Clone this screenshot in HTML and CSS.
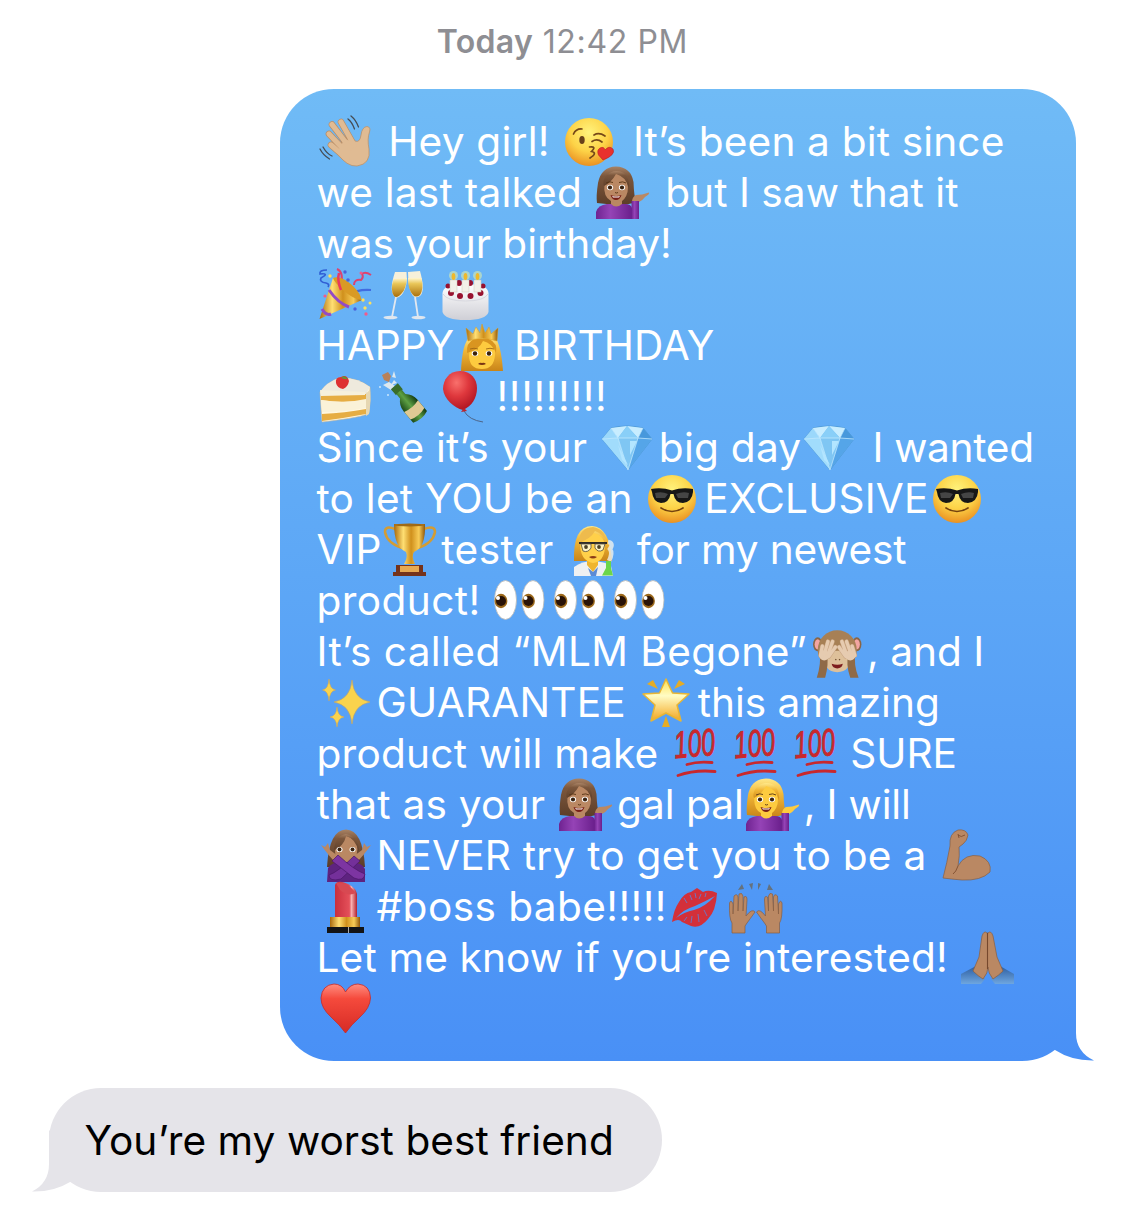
FILE: index.html
```html
<!DOCTYPE html>
<html lang="en">
<head>
<meta charset="utf-8">
<title>Messages</title>
<link rel="stylesheet" href="styles.css">
</head>
<body>
<svg class="sprite" aria-hidden="true">
<defs>
<radialGradient id="g-face" cx=".5" cy=".3" r=".72"><stop offset="0" stop-color="#fff27c"/><stop offset=".55" stop-color="#fdd347"/><stop offset="1" stop-color="#e98d20"/></radialGradient>
<linearGradient id="g-purple" x2="1"><stop offset="0" stop-color="#6f2391"/><stop offset=".4" stop-color="#9543b6"/><stop offset="1" stop-color="#6a1f8c"/></linearGradient>
<linearGradient id="g-gold" x2="1"><stop offset="0" stop-color="#a9690c"/><stop offset=".3" stop-color="#ffdf73"/><stop offset=".55" stop-color="#d0901c"/><stop offset=".8" stop-color="#f8cc57"/><stop offset="1" stop-color="#8f560a"/></linearGradient>
<linearGradient id="g-blond" x2="0" y2="1"><stop offset="0" stop-color="#ffe98a"/><stop offset=".4" stop-color="#f2b838"/><stop offset="1" stop-color="#c98418"/></linearGradient>
<linearGradient id="g-brown" x2="0" y2="1"><stop offset="0" stop-color="#a98365"/><stop offset=".25" stop-color="#7c573c"/><stop offset="1" stop-color="#5c3d28"/></linearGradient>
<linearGradient id="g-wine" x2="0" y2="1"><stop offset="0" stop-color="#fff6cf"/><stop offset=".3" stop-color="#e9c658"/><stop offset="1" stop-color="#a96e0c"/></linearGradient>
<linearGradient id="g-cake" x2="0" y2="1"><stop offset="0" stop-color="#ffffff"/><stop offset="1" stop-color="#cfcfd6"/></linearGradient>
<radialGradient id="g-balloon" cx=".4" cy=".3" r=".7"><stop offset="0" stop-color="#f9706c"/><stop offset=".5" stop-color="#df383d"/><stop offset="1" stop-color="#b31724"/></radialGradient>
<linearGradient id="g-heart" x2="0" y2="1"><stop offset="0" stop-color="#ff8d80"/><stop offset=".3" stop-color="#f54a3c"/><stop offset="1" stop-color="#d62b25"/></linearGradient>
<linearGradient id="g-star" x2="0" y2="1"><stop offset="0" stop-color="#ffe04d"/><stop offset=".4" stop-color="#fffcc4"/><stop offset="1" stop-color="#f3a51f"/></linearGradient>
<linearGradient id="g-lip" x2="1"><stop offset="0" stop-color="#c92f3d"/><stop offset=".65" stop-color="#e4505a"/><stop offset=".75" stop-color="#f9b0b0"/><stop offset="1" stop-color="#b3202e"/></linearGradient>
<linearGradient id="g-bottle" x2="1"><stop offset="0" stop-color="#1c4a17"/><stop offset=".5" stop-color="#5da044"/><stop offset="1" stop-color="#143a10"/></linearGradient>
<linearGradient id="g-sleeve" x2="0" y2="1"><stop offset="0" stop-color="#2d5d9f"/><stop offset="1" stop-color="#6ea6e0"/></linearGradient>
<linearGradient id="g-tail" x2="0" y2="1"><stop offset="0" stop-color="#4b93f6"/><stop offset="1" stop-color="#4990f6"/></linearGradient>

<symbol id="wave" viewBox="0 0 60 52">
<g fill="none" stroke="#454b52" stroke-width="1.3" stroke-linecap="round"><path d="M34 1q5 4 7.500 11M31 4q4 3 6.500 10M3 34q3 6 9.500 10M6 32q4 7 9 9"/></g>
<g stroke="#b98e67" stroke-width="6.600" stroke-linecap="round"><path d="M24 7L37 30M15 9.500L33 33M12 19L31 39M14 30L30 44"/></g>
<path d="M27 24L38 26Q43 28 44 20Q45 12 50 11.500Q54 12 52.500 17Q50 24 52 34Q54 49 40 51Q30 52 20 38Z" fill="#e0bb93" stroke="#bd936b" stroke-width=".8"/>
<g stroke="#e0bb93" stroke-width="5.200" stroke-linecap="round"><path d="M24 7L37 30M15 9.500L33 33M12 19L31 39M14 30L30 44"/></g>
</symbol>

<symbol id="kiss" viewBox="0 0 60 52">
<circle cx="28" cy="27" r="24" fill="url(#g-face)"/>
<ellipse cx="21" cy="25" rx="2.700" ry="4" fill="#68401a"/>
<path d="M12.500 19Q15 13.500 21 14M33 20Q38 17 44 21M31 26.500Q36 23 41 27M28.500 32Q36 31 30.500 36.500Q37 38 29 43" fill="none" stroke="#754818" stroke-width="1.700" stroke-linecap="round"/>
<path d="M42 45L37.500 40Q35.500 35 39 33Q43 31 44 35Q48 30 52 34Q55 40 42 45Z" fill="#e8312d" stroke="#b81d20" stroke-width=".6"/>
</symbol>

<symbol id="tipping" viewBox="0 0 60 52">
<path d="M3 37Q2 30 4 17Q7 1 22 .500Q37 1 39.500 16Q40 30 42 36Q35 39 22 39Z" class="hair"/>
<path d="M2 53V46Q4 39 13 38H31Q37 38 38 42V53Z" fill="url(#g-purple)"/>
<path d="M17 33H28V38Q22 43 17 38Z" class="skin"/>
<path d="M22 7Q33 10 34 21Q34 31 27 36Q22 38 17 35Q9 31 10.500 18Q18 15 22 7Z" class="skin"/>
<path d="M10 20Q17 17 22 8Q31 10 35 22Q36 13 30 7Q20 2 12 10Q8 15 10 20Z" class="hair"/>
<ellipse cx="16" cy="21.500" rx="3.100" ry="2.700" fill="#fff"/><ellipse cx="28" cy="21.500" rx="3.100" ry="2.700" fill="#fff"/>
<circle cx="16" cy="21.500" r="2.100" fill="#38210f"/><circle cx="28" cy="21.500" r="2.100" fill="#38210f"/>
<path d="M12 17q4-2 7-.5M25 16.500q4-1.500 7 .5M21 26.500q1.500 1 3 0" fill="none" stroke="#573414" stroke-width=".9"/>
<path d="M16.500 29Q22 31 27.500 29Q26 34 22 34Q18 34 16.500 29Z" fill="#782017"/><path d="M18 30Q22 31 26 30L25 31.500H19Z" fill="#fff"/>
<path d="M38 36Q38 31 42 29Q48 29 55 26.500Q56 28 51 31Q48 35 45 36Z" class="skin"/>
<path d="M37.500 35H45V53H37.500Z" fill="url(#g-purple)"/>
</symbol>

<symbol id="party" viewBox="0 0 60 52">
<path d="M10 2Q2 2 3 6Q13 5 4 10Q2 14 9 15Q13 16 11 19" fill="none" stroke="#315fd4" stroke-width="1.700"/>
<path d="M20 1Q27 4 24 17M37 17Q37 11 44 12Q47 9 45 6Q48 3 54 7" fill="none" stroke="#dc4370" stroke-width="2"/>
<path d="M33 27Q40 21 54 22" fill="none" stroke="#416ce0" stroke-width="2.200"/>
<path d="M2.500 51L16 10Q26 9 45 32Z" fill="url(#g-gold)"/>
<path d="M16 10Q24 7 36 18Q45 27 44 32Q36 31 26 22Q17 14 16 10Z" fill="#d99a25"/>
<path d="M12 22Q21 35 32 39M5 41Q9 48 14 46" fill="none" stroke="#934bc5" stroke-width="3"/>
<path d="M24 22Q20 12 22 5" fill="none" stroke="#e9375f" stroke-width="2.500"/>
<g fill="#4a62d9"><circle cx="28" cy="4" r="1.700"/><circle cx="31" cy="12" r="1.800"/><circle cx="38" cy="41" r="1.700"/></g>
<g fill="#f35a8b"><circle cx="8" cy="28" r="1.600"/><circle cx="44" cy="5" r="1.500"/><circle cx="49" cy="46" r="1.700"/></g>
<g fill="#ffe05b"><circle cx="13" cy="8" r="1.700"/><circle cx="46" cy="32" r="1.700"/><circle cx="48" cy="40" r="1.700"/><circle cx="53" cy="35" r="1.500"/></g>
</symbol>

<symbol id="clink" viewBox="0 0 60 52">
<path d="M19 29L15 49M38 29L41 49" stroke="#e1e7ef" stroke-width="1.800"/>
<ellipse cx="13.500" cy="49.500" rx="7" ry="1.700" fill="#dfe6ee"/><ellipse cx="41.500" cy="49.500" rx="7" ry="1.700" fill="#dfe6ee"/>
<path d="M18 4L29.500 4Q31 17 26 25Q21 32 17 28Q12 22 18 4ZM31 4L43 3Q48 21 44 27Q40 31 36 28Q31 22 31 4Z" fill="#f6f0da"/>
<path d="M16.500 11L30 10Q29 21 25 25Q20 31 17 28Q13 23 16.500 11ZM31 10L44.500 10Q47 21 43 27Q39 30 36 27Q31 22 31 10Z" fill="url(#g-wine)"/>
</symbol>

<symbol id="cake" viewBox="0 0 60 52">
<path d="M5.500 25Q6 16 28.500 16Q51 16 51.500 25V44Q49 52 28.500 52Q8 52 5.500 44Z" fill="url(#g-cake)"/>
<path d="M6 26Q10 33 28.500 33Q47 33 51 26" fill="none" stroke="#d8d8df" stroke-width="1"/>
<g fill="#ff9" opacity=".45"><circle cx="16.500" cy="7.500" r="4.500"/><circle cx="28.500" cy="7.500" r="4.500"/><circle cx="40.500" cy="7.500" r="4.500"/></g>
<g fill="#98112f"><circle cx="22" cy="15" r="3"/><circle cx="33" cy="15" r="3"/><circle cx="11" cy="18" r="2.500"/><circle cx="46" cy="18" r="2.500"/><circle cx="14" cy="25" r="3"/><circle cx="23" cy="28" r="3"/><circle cx="33.500" cy="28" r="3"/><circle cx="43.500" cy="25" r="3"/></g>
<g fill="#f2f0e8" stroke="#cfcabb" stroke-width=".5"><rect x="13" y="12" width="7" height="12"/><rect x="25" y="12" width="7" height="12"/><rect x="37" y="12" width="7" height="12"/></g>
<g fill="#eeb92d"><ellipse cx="16.500" cy="8.500" rx="1.900" ry="3.500"/><ellipse cx="28.500" cy="8.500" rx="1.900" ry="3.500"/><ellipse cx="40.500" cy="8.500" rx="1.900" ry="3.500"/></g>
</symbol>

<symbol id="princess" viewBox="0 0 60 52">
<path d="M7 52Q8 25 16 17H40Q47 24 49 52Z" fill="url(#g-blond)"/>
<path d="M28 21Q42 22 41 36Q40 50 28 50Q15 50 15 36Q14 28 28 21Z" fill="#fdcb3f"/>
<path d="M13 34Q25 31 29 22Q38 24 42 34Q44 24 35 20H20Q12 24 13 34Z" fill="#d99520"/>
<ellipse cx="21" cy="34.500" rx="3.300" ry="2.800" fill="#fff"/><ellipse cx="35" cy="34.500" rx="3.300" ry="2.800" fill="#fff"/>
<circle cx="21" cy="34.500" r="2.200" fill="#3b2209"/><circle cx="35" cy="34.500" r="2.200" fill="#3b2209"/>
<path d="M16 30q4-1.500 8 0M32 30q4-1.500 8 0" fill="none" stroke="#9d6616" stroke-width=".9"/>
<path d="M24 45Q26 43 28 44Q30 43 32 45Q28 47 24 45Z" fill="#7a3513"/>
<path d="M14 22L12 9L19 15L22 8L26 14L28 5L31 14L35 8L37 15L44 9L43 22Q28 17 14 22Z" fill="url(#g-gold)" stroke="#d99c22" stroke-width=".5"/>
</symbol>

<symbol id="shortcake" viewBox="0 0 60 52">
<path d="M3 22Q10 12 22 8Q40 7 53 17Q54 30 52 43Q48 47 5 52Z" fill="#fff7df" stroke="#c9b998" stroke-width=".6"/>
<path d="M3 22L49 24L53 17Q40 7 22 8Q10 12 3 22Z" fill="#eeeadd"/>
<path d="M4 23L49 24V30Q28 34 4 30ZM5 44Q28 43 49 39V44Q28 48 5 51Z" fill="#e6ad43"/>
<path d="M4 30Q28 34 49 29V38Q28 42 5 42Z" fill="#faf2d8"/><path d="M3 20L48 22V25L4 26Z" fill="#f6f0dc"/>
<path d="M49 23Q53 21 53 17Q54 33 52 44L49 46Z" fill="#e6d7b2"/>
<path d="M19 13Q18 7 24 7Q30 4 32 11Q31 17 26 19Q20 18 19 13Z" fill="#de3132"/><path d="M24 8L27 6L31 9L28 9Z" fill="#5f9a36"/>
</symbol>

<symbol id="champagne" viewBox="0 0 60 52">
<path d="M5 5L11 2L14 6L12 12L7 10Z" fill="#b98158"/>
<path d="M15 7L17 1L19 8ZM6 15L12 12L18 16L14 20ZM17 10L20 13L14 15Z" fill="#dce8ef"/>
<circle cx="11" cy="25" r="1" fill="#cbe7fb"/><circle cx="3" cy="17" r="1" fill="#cbe7fb"/>
<g transform="translate(18 17) rotate(-40)"><path d="M-3.500 0H3.500V12Q9 17 9 24V39Q0 43-9 39V24Q-9 17-3.500 12Z" fill="url(#g-bottle)"/><path d="M-9 25Q0 28 9 25V35Q0 38-9 35Z" fill="#dfc994"/><path d="M-4.500-1H4.500V7Q0 5-4.500 7Z" fill="#3a6d29"/></g>
</symbol>

<symbol id="balloon" viewBox="0 0 60 52">
<path d="M27 41Q32 50 46 52" fill="none" stroke="#4d6589" stroke-width="1"/>
<path d="M23 1C12 1 6 10 6 19C7 29 17 38 26 40C35 36 40 28 40 18C40 9 34 1 23 1Z" fill="url(#g-balloon)"/><path d="M24 42L27 38L30 41Z" fill="#bd242c"/>
</symbol>

<symbol id="gem" viewBox="0 0 60 52">
<path d="M3 18L12 7Q28 3 44 7L53 18L29 49Z" fill="#75bff0" stroke="#4b96d3" stroke-width=".8"/>
<path d="M12 7L19 17L28 5ZM28 5L39 17L44 7Z" fill="#c8edff"/><path d="M3 18L12 7L19 17Z" fill="#9bd8fb"/><path d="M44 7L53 18L39 17Z" fill="#4798dc"/>
<path d="M19 17L28 5L39 17Z" fill="#89cff8"/>
<path d="M3 18L19 17L29 49Z" fill="#a1dcfc"/><path d="M19 17H39L29 49Z" fill="#7fc6f3"/><path d="M39 17L53 18L29 49Z" fill="#55a5e8"/>
<path d="M3 18L19 17H39L53 18M12 7L19 17L29 49L39 17L44 7" fill="none" stroke="#c9ecff" stroke-width=".7"/><path d="M19 24L29 44L23 39ZM31 20L38 20L31 34Z" fill="#b3e5ff"/>
</symbol>

<symbol id="cool" viewBox="0 0 60 52">
<circle cx="28" cy="27" r="24" fill="url(#g-face)"/>
<path d="M7 17Q18 15 28 18.500Q38 15 49 17V20Q48 30 39 31Q31 31 29.500 22H26.500Q25 31 17 31Q9 30 8 20Z" fill="#171717"/>
<path d="M11 21Q18 19 24 22L21 26H12ZM32 22Q39 19 45 21L44 26H34Z" fill="#454545"/>
<path d="M17 36Q28 43 39 36" fill="none" stroke="#74420f" stroke-width="1.700" stroke-linecap="round"/>
</symbol>

<symbol id="trophy" viewBox="0 0 60 52">
<path d="M14 6Q4 2 4 9Q6 20 21 25M43 6Q54 2 54 9Q52 20 37 25" fill="none" stroke="#d39c34" stroke-width="2.500"/>
<path d="M13 1H44Q45 24 33 29Q30 33 34 41H23Q27 34 25 29Q13 24 13 1Z" fill="url(#g-gold)"/><ellipse cx="28.500" cy="2" rx="15.500" ry="1.500" fill="#a06a16"/>
<path d="M15 42H42V49H45V53H12V49H15Z" fill="#75331b"/><rect x="19" y="43" width="19" height="6" fill="#e6a951"/>
</symbol>

<symbol id="scientist" viewBox="0 0 60 52">
<path d="M9 38Q8 3 27 3Q45 4 47 38Z" fill="url(#g-blond)"/>
<path d="M9 53V44Q17 38 28 38Q42 39 46 43L48 53Z" fill="#eef0f2"/>
<path d="M22 37H33V42L28 49L22 42Z" fill="#efb52f"/><path d="M23 45L28 49L33 44L31 53H26Z" fill="#5c8bd5"/>
<path d="M15 20Q23 15 29 10Q40 13 40 24Q39 39 28 40Q15 38 15 20Z" fill="#ffd04a"/>
<path d="M14 19Q25 17 30 8Q39 11 42 22Q41 6 28 4Q14 5 14 19Z" fill="#eebb4d"/>
<path d="M14 20H42" stroke="#302d29" stroke-width="2"/><path d="M16 21H26V25Q23 30 18 28ZM30 21H40L38 27Q33 30 30 25Z" fill="#fff4c5" stroke="#514b40" stroke-width=".8"/>
<circle cx="21" cy="24" r="1.900" fill="#4c4328"/><circle cx="34" cy="24" r="1.900" fill="#4c4328"/><path d="M24 34Q28 32 32 34Q28 37 24 34Z" fill="#8b3b16"/>
<path d="M43 19Q49 20 45 26Q48 30 44 38" fill="none" stroke="#edf0ed" stroke-width="4.500" opacity=".8"/><path d="M41 38H46V45L48 52.500H37L41 45Z" fill="#6bd64a"/>
</symbol>

<symbol id="eyes" viewBox="0 0 60 52">
<g fill="#fff" stroke="#b8b7b6" stroke-width=".8"><ellipse cx="13.500" cy="26" rx="11" ry="19.500"/><ellipse cx="41" cy="26" rx="11" ry="19.500"/></g>
<g fill="#9c691b"><ellipse cx="9" cy="27" rx="6.400" ry="7.200"/><ellipse cx="36.500" cy="27" rx="6.400" ry="7.200"/></g><circle cx="9" cy="27" r="5" fill="#291307"/><circle cx="36.500" cy="27" r="5" fill="#291307"/><circle cx="6" cy="24" r="2" fill="#fff"/><circle cx="33.500" cy="24" r="2" fill="#fff"/>
</symbol>

<symbol id="monkey" viewBox="0 0 60 52"><g transform="translate(4.200 3.500) scale(.93)">
<g fill="#8a6545"><ellipse cx="7" cy="17" rx="5" ry="7.500"/><ellipse cx="49" cy="17" rx="5" ry="7.500"/></g><g fill="#f3a5a1"><ellipse cx="7" cy="17" rx="3.300" ry="5.500"/><ellipse cx="49" cy="17" rx="3.300" ry="5.500"/></g>
<circle cx="28" cy="23" r="21" fill="#a78055"/><path d="M15 30Q28 18 42 30Q43 46 28 47Q13 46 15 30Z" fill="#dec09a"/>
<path d="M6 53Q11 37 9 26L17 29Q19 38 15 53ZM42 53Q37 39 40 28L48 26Q45 38 51 53Z" fill="#8f6a47"/>
<g stroke="#c9a584" stroke-width="4.600" stroke-linecap="round"><path d="M10 29L12 19M14 28L18 14M18 28L23 14M19 30L26 20M47 29L44 19M43 28L38 14M38 28L33 14M37 30L30 20"/></g>
<circle cx="14" cy="29" r="5.500" fill="#e6cbb0"/><circle cx="42" cy="29" r="5.500" fill="#e6cbb0"/>
<g stroke="#e6cbb0" stroke-width="3.600" stroke-linecap="round"><path d="M10 29L12 19M14 28L18 14M18 28L23 14M19 30L26 20M47 29L44 19M43 28L38 14M38 28L33 14M37 30L30 20"/></g>
<path d="M22 38Q28 40 34 38Q33 43 28 43Q23 43 22 38Z" fill="#7d1d1d"/><path d="M26 33l1 1M31 33l-1 1" stroke="#6d4c2e" stroke-width="1.300"/></g>
</symbol>

<symbol id="sparkles" viewBox="0 0 60 52"><g fill="#f9d34d" stroke="#e5a93a" stroke-width=".5"><path d="M35 4Q36.500 23 53 26Q36.500 29 35 48Q33.500 29 17 26Q33.500 23 35 4ZM12 3Q12.500 13 18.500 14Q12.500 15 12 25Q11.500 15 5.500 14Q11.500 13 12 3ZM20 31Q20.500 40 27 41Q20.500 42 20 51Q19.500 42 13 41Q19.500 40 20 31Z"/></g></symbol>

<symbol id="star" viewBox="0 0 60 52"><path d="M9 8L15 4L20 13ZM47 8L41 4L36 13ZM28 40L32 51H24Z" fill="#e5ac25"/><path d="M28 3L34.500 17L51 18L39 29L43 45L28 37L13 45L17 29L5 18L21.500 17Z" fill="url(#g-star)" stroke="#e8b534" stroke-width="1.500" stroke-linejoin="round"/></symbol>

<symbol id="hundred" viewBox="0 0 60 52"><text x="5" y="31" transform="rotate(-5 8 31)" textLength="41" lengthAdjust="spacingAndGlyphs" class="score">100</text><path d="M17 37.500Q28 34 42 35.500M8 48.500Q25 42.500 45 44.500" fill="none" stroke="#c9282d" stroke-width="2.800" stroke-linecap="round"/></symbol>

<symbol id="no-good" viewBox="0 0 60 52">
<path d="M10 38Q12 1 29 .500Q46 1 48 38Z" class="hair"/><path d="M29 7Q42 10 40 23Q39 36 29 36Q18 35 18 21Q25 16 29 7Z" class="skin"/><path d="M17 21Q27 17 29 7Q38 9 42 23Q42 8 29 5Q18 7 17 21Z" class="hair"/>
<ellipse cx="22.500" cy="20.500" rx="3" ry="2.600" fill="#fff"/><ellipse cx="35.500" cy="20.500" rx="3" ry="2.600" fill="#fff"/><circle cx="22.500" cy="20.500" r="2" fill="#38210f"/><circle cx="35.500" cy="20.500" r="2" fill="#38210f"/>
<path d="M10 53L11 39Q15 32 28 33Q45 32 48 40V53Z" fill="#5e2380"/>
<path d="M18 33Q12 27 4 16L8 18L11 14L13 21L21 27ZM40 33Q46 27 54 16L50 18L47 14L45 21L37 27Z" class="skin"/>
<path d="M37 27L43 32L24 50Q12 53 12 46Q21 43 37 27Z" fill="#74309a" stroke="#4a1768" stroke-width=".7"/><path d="M21 26L15 32L37 49Q47 53 48 45Q37 41 21 26Z" fill="#7d35a2" stroke="#4a1768" stroke-width=".7"/>
</symbol>

<symbol id="lipstick" viewBox="0 0 60 52"><path d="M18 37V5Q20-1 31 4Q39 8 40 14V37Z" fill="url(#g-lip)"/><path d="M19 3Q29 0 39 13Q31 17 23 10Z" fill="#d84952"/><rect x="13" y="37" width="30" height="10" fill="url(#g-gold)"/><path d="M10 47H47V53H10Z" fill="#131416"/><path d="M31.500 47v6" stroke="#aaa" stroke-width="1"/></symbol>

<symbol id="lips" viewBox="0 0 60 52"><path d="M5 42Q7 29 12 22Q17 13 24 12L30 8L36 12Q42 9 50 13Q49 31 41 39Q33 49 24 46L15 42Q12 38 5 42Z" fill="#d3303a"/><path d="M9 38Q17 29 28 26Q39 21 48 16Q38 27 27 30Q17 32 9 38Z" fill="#4d97f5"/><path d="M17 18l3 5M23 15l2 5M28 13l1 5M34 14l-2 5M39 13l-1 4M20 37l-3 4M25 36l-1 7M31 34l1 8M37 30l3 6" stroke="#7372bb" stroke-width="1"/></symbol>

<symbol id="praise" viewBox="0 0 60 52"><path d="M11 10L15 4L17 9ZM22 4L25 10L26 3ZM31 3L34 4L31 10ZM40 10L42 4L46 10Z" fill="#65717d"/>
<g id="open-hand"><path d="M5 53V43Q2 39 2.500 23Q4 19 6 24V34L7 16Q10 13 11 17V31L12 14Q15 12 16 16V31L17 17Q20 15 20 20L19 36Q25 28 28 32Q23 39 20 43L18 46V53Z" fill="#ba8863" stroke="#8a5e41" stroke-width=".7"/></g><use href="#open-hand" transform="matrix(-1 0 0 1 57.500 0)"/></symbol>

<symbol id="biceps" viewBox="0 0 60 52"><path d="M5 49Q9 34 12 17Q11 4 20 1Q28 0 30 6Q29 12 25 15L21 18Q22 26 20 37Q27 24 42 27Q54 32 52 43Q43 52 24 51Q12 50 5 49Z" fill="#ba8863" stroke="#8a5e41" stroke-width=".7"/><path d="M20 37Q18 43 15 45M20 6q3 3 7 0M20 5l1 4" fill="none" stroke="#7f4e30" stroke-width=".9"/></symbol>

<symbol id="pray" viewBox="0 0 60 52"><path d="M2 53V43L17 35L26 48L22 53ZM55 53V43L41 35L32 48L36 53Z" fill="url(#g-sleeve)"/><path d="M28 2Q25-1 23 5L20 26L14 40Q19 45 24 48Q29 42 29 36Q29 42 34 48Q40 44 44 40L38 26L34 5Q32-1 29 2Z" fill="#ba8863" stroke="#8a5e41" stroke-width=".7"/><path d="M28.500 2V38" stroke="#76482d" stroke-width="1.100"/></symbol>

<symbol id="heart" viewBox="0 0 60 52"><path d="M28.500 51Q23 43 14 35Q4 26 4 16Q5 3 17 2Q25 2 28.500 10Q33 2 41 2Q53 3 53.500 16Q53 26 43 35Q34 43 28.500 51Z" fill="url(#g-heart)" stroke="#c42a28" stroke-width=".8"/></symbol>
</defs>
</svg>

<main class="thread">
<p class="stamp"><b>Today</b> 12:42 PM</p>
<div class="bubble sent">
<p class="line"><svg class="emoji"><use href="#wave"/></svg><span class="open"> Hey girl! </span><svg class="emoji"><use href="#kiss"/></svg><span class="loose"> It’s been a bit since</span></p>
<p class="line"><span class="open">we last talked </span><svg class="emoji medium"><use href="#tipping"/></svg><span class="slight"> but I saw that it</span></p>
<p class="line"><span>was your birthday!</span></p>
<p class="line"><svg class="emoji"><use href="#party"/></svg><svg class="emoji"><use href="#clink"/></svg><svg class="emoji"><use href="#cake"/></svg></p>
<p class="line"><span>HAPPY</span><svg class="emoji"><use href="#princess"/></svg><span>BIRTHDAY</span></p>
<p class="line"><svg class="emoji"><use href="#shortcake"/></svg><svg class="emoji"><use href="#champagne"/></svg><svg class="emoji"><use href="#balloon"/></svg><span class="widest">!!!!!!!!!</span></p>
<p class="line"><span class="open">Since it’s your </span><svg class="emoji"><use href="#gem"/></svg><span class="open">big day</span><svg class="emoji"><use href="#gem"/></svg><span class="tight"> I wanted</span></p>
<p class="line"><span class="open">to let YOU be an </span><svg class="emoji"><use href="#cool"/></svg><span class="loose">EXCLUSIVE</span><svg class="emoji"><use href="#cool"/></svg></p>
<p class="line"><span>VIP</span><svg class="emoji"><use href="#trophy"/></svg><span class="wide">tester </span><svg class="emoji"><use href="#scientist"/></svg><span class="snug"> for my newest</span></p>
<p class="line"><span class="wide">product! </span><svg class="emoji"><use href="#eyes"/></svg><svg class="emoji"><use href="#eyes"/></svg><svg class="emoji"><use href="#eyes"/></svg></p>
<p class="line"><span class="wide">It’s called “MLM Begone”</span><svg class="emoji"><use href="#monkey"/></svg><span>, and I</span></p>
<p class="line"><svg class="emoji"><use href="#sparkles"/></svg><span class="open">GUARANTEE </span><svg class="emoji"><use href="#star"/></svg><span>this amazing</span></p>
<p class="line"><span class="open">product will make </span><svg class="emoji"><use href="#hundred"/></svg><svg class="emoji"><use href="#hundred"/></svg><svg class="emoji"><use href="#hundred"/></svg><span>SURE</span></p>
<p class="line"><span class="open">that as your </span><svg class="emoji medium"><use href="#tipping"/></svg><span>gal pal</span><svg class="emoji"><use href="#tipping"/></svg><span class="snug">, I will</span></p>
<p class="line"><svg class="emoji medium"><use href="#no-good"/></svg><span class="open">NEVER try to get you to be a </span><svg class="emoji"><use href="#biceps"/></svg></p>
<p class="line"><svg class="emoji"><use href="#lipstick"/></svg><span class="wide">#boss babe!!!!!</span><svg class="emoji"><use href="#lips"/></svg><svg class="emoji"><use href="#praise"/></svg></p>
<p class="line"><span class="loose">Let me know if you’re interested! </span><svg class="emoji"><use href="#pray"/></svg></p>
<p class="line"><svg class="emoji"><use href="#heart"/></svg></p>
<svg class="tail" viewBox="0 0 54 62"><path d="M0 40L15 51Q32 62 54 61.500Q36 53 36 34V0Z"/></svg>
</div>
<div class="bubble received">
<p class="line"><span class="slight">You’re my worst best friend</span></p>
<svg class="tail" viewBox="0 0 54 62"><path d="M54 40L38 52Q22 62 0 61.500Q17 53 17 34V0Z"/></svg>
</div>
</main>
</body>
</html>
```
FILE: styles.css
```css
* { box-sizing: border-box; }
body {
  margin: 0;
  background: #fff;
  font-family: Inter, "Liberation Sans", sans-serif;
}
p { margin: 0; }
.sprite { position: absolute; width: 0; height: 0; }
.thread {
  width: 1125px;
  height: 1210px;
  padding-top: 22px;
  overflow: hidden;
  display: flex;
  flex-direction: column;
}
.stamp {
  height: 40px;
  line-height: 40px;
  text-align: center;
  color: #8e8e93;
  font-size: 32px;
  letter-spacing: .65px;
}
.stamp b { font-weight: 600; letter-spacing: .3px; }
.bubble { position: relative; }
.sent {
  width: 796px;
  height: 971.5px;
  margin: 27px 0 0 280px;
  padding: 26px 0 0 36.5px;
  border-radius: 54px;
  background: linear-gradient(#70bbf6, #5da7f6 50%, #4990f6);
  color: #fff;
}
.received {
  width: 613px;
  height: 104px;
  margin: 27.5px 0 0 49px;
  padding: 26px 0 0 35.5px;
  border-radius: 52px;
  background: #e5e4e9;
  color: #000;
}
.line {
  display: flex;
  height: 51px;
  line-height: 51px;
  font-size: 40.6px;
  white-space: pre;
}
.line span { padding-top: 1px; height: 52px; }

/* Tracking steps for the runs of text between emoji */
.tight { letter-spacing: -.3px; }
.snug { letter-spacing: -.15px; }
.slight { letter-spacing: .05px; }
.loose { letter-spacing: .16px; }
.open { letter-spacing: .24px; }
.wide { letter-spacing: .42px; }
.widest { letter-spacing: .65px; }

.emoji { flex: none; width: 60px; height: 52px; overflow: visible; }
symbol { overflow: visible; }
.hair { fill: var(--hair, url(#g-blond)); }
.skin { fill: var(--skin, #fdcb3f); }
.medium { --hair: url("#g-brown"); --skin: #ba8863; }
.score {
  font: italic 38px "Liberation Sans", sans-serif;
  fill: #c9282d;
  stroke: #c9282d;
  stroke-width: 1px;
}
.tail { position: absolute; bottom: 0; width: 54px; height: 62px; }
.sent .tail { right: -18px; fill: url(#g-tail); }
.received .tail { left: -17px; fill: #e5e4e9; }
```
